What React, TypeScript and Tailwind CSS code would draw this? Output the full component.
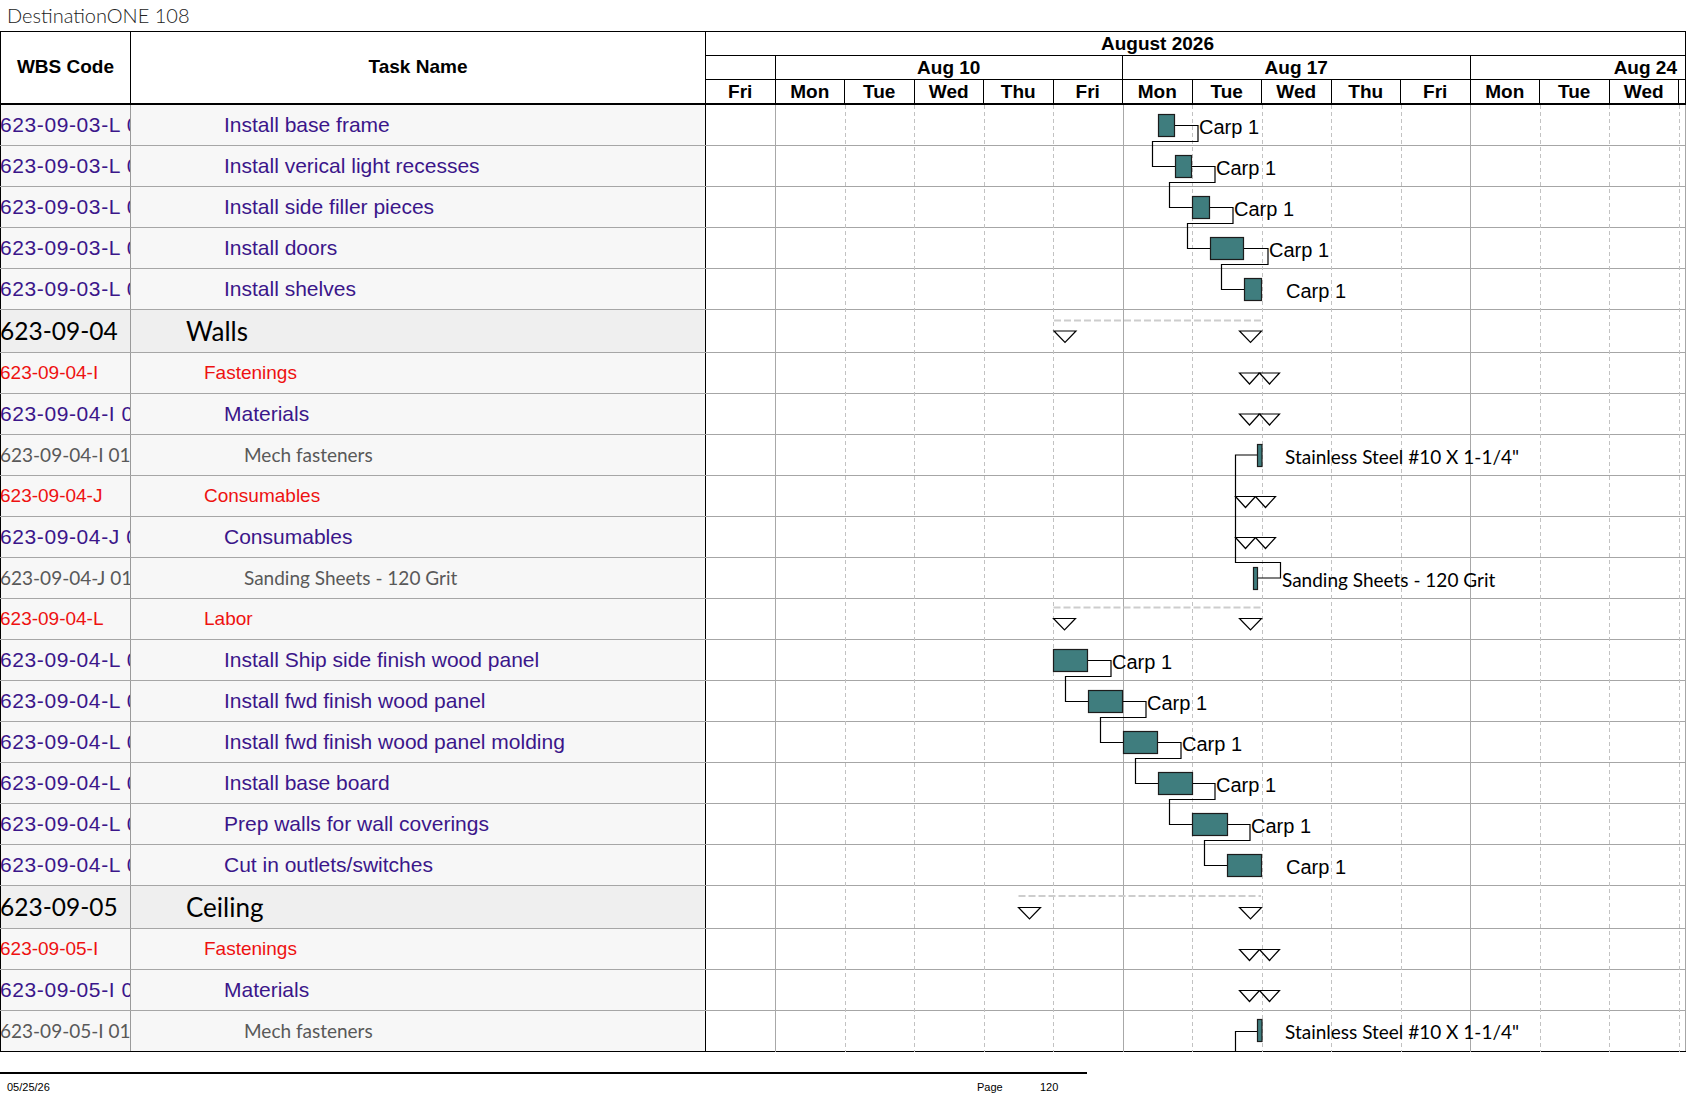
import React from "react";

type Kind = "task" | "summary" | "red" | "item";

type Row = {
  wbs: string;
  name: string;
  kind: Kind;
};

const ROWS: Row[] = [
  { wbs: "623-09-03-L 01", name: "Install base frame", kind: "task" },
  { wbs: "623-09-03-L 02", name: "Install verical light recesses", kind: "task" },
  { wbs: "623-09-03-L 03", name: "Install side filler pieces", kind: "task" },
  { wbs: "623-09-03-L 04", name: "Install doors", kind: "task" },
  { wbs: "623-09-03-L 05", name: "Install shelves", kind: "task" },
  { wbs: "623-09-04", name: "Walls", kind: "summary" },
  { wbs: "623-09-04-I", name: "Fastenings", kind: "red" },
  { wbs: "623-09-04-I 01", name: "Materials", kind: "task" },
  { wbs: "623-09-04-I 01-01", name: "Mech fasteners", kind: "item" },
  { wbs: "623-09-04-J", name: "Consumables", kind: "red" },
  { wbs: "623-09-04-J 01", name: "Consumables", kind: "task" },
  { wbs: "623-09-04-J 01-01", name: "Sanding Sheets - 120 Grit", kind: "item" },
  { wbs: "623-09-04-L", name: "Labor", kind: "red" },
  { wbs: "623-09-04-L 01", name: "Install Ship side finish wood panel", kind: "task" },
  { wbs: "623-09-04-L 02", name: "Install fwd finish wood panel", kind: "task" },
  { wbs: "623-09-04-L 03", name: "Install fwd finish wood panel molding", kind: "task" },
  { wbs: "623-09-04-L 04", name: "Install base board", kind: "task" },
  { wbs: "623-09-04-L 05", name: "Prep walls for wall coverings", kind: "task" },
  { wbs: "623-09-04-L 06", name: "Cut in outlets/switches", kind: "task" },
  { wbs: "623-09-05", name: "Ceiling", kind: "summary" },
  { wbs: "623-09-05-I", name: "Fastenings", kind: "red" },
  { wbs: "623-09-05-I 01", name: "Materials", kind: "task" },
  { wbs: "623-09-05-I 01-01", name: "Mech fasteners", kind: "item" },
];

const DAYS = ["Fri", "Mon", "Tue", "Wed", "Thu", "Fri", "Mon", "Tue", "Wed", "Thu", "Fri", "Mon", "Tue", "Wed"];

const ARIAL = "font-['Liberation_Sans',Arial,sans-serif]";
const CALIBRI = "font-['Lato','Liberation_Sans',sans-serif]";

// row tops in page coordinates
const BODY_TOP = 105;
const TOPS: number[] = [];
{
  let y = BODY_TOP;
  for (const r of ROWS) {
    TOPS.push(y);
    y += r.kind === "summary" ? 43 : 41;
  }
}
const BODY_H = ROWS.reduce((s, r) => s + (r.kind === "summary" ? 43 : 41), 0);

type Bar = { row: number; l: number; r: number; label: number; vx?: number };

const WOOD_CHAIN: Bar[] = [
  { row: 0, l: 1158.5, r: 1174.5, label: 1199, vx: 1152.5 },
  { row: 1, l: 1175.5, r: 1191.5, label: 1216, vx: 1169.5 },
  { row: 2, l: 1192.5, r: 1209.5, label: 1234, vx: 1187.5 },
  { row: 3, l: 1210.5, r: 1243.5, label: 1269, vx: 1221.5 },
  { row: 4, l: 1244.5, r: 1261.5, label: 1286 },
];

const LABOR_CHAIN: Bar[] = [
  { row: 13, l: 1053.5, r: 1087.5, label: 1112, vx: 1065.5 },
  { row: 14, l: 1088.5, r: 1122.5, label: 1147, vx: 1100.5 },
  { row: 15, l: 1123.5, r: 1157.5, label: 1182, vx: 1135.5 },
  { row: 16, l: 1158.5, r: 1192.5, label: 1216, vx: 1169.5 },
  { row: 17, l: 1192.5, r: 1227.5, label: 1251, vx: 1204.5 },
  { row: 18, l: 1227.5, r: 1261.5, label: 1286 },
];

const TEAL = "#3f7d7e";

function Milestone({ x, y, w = 22, h = 11.5 }: { x: number; y: number; w?: number; h?: number }) {
  return (
    <path
      d={`M${x} ${y} H${x + w} L${x + w / 2} ${y + h} Z`}
      fill="#fff"
      stroke="#000"
      strokeWidth={1.2}
    />
  );
}

function DoubleMilestone({ x, y }: { x: number; y: number }) {
  return (
    <>
      <Milestone x={x} y={y} w={20} h={11} />
      <Milestone x={x + 20} y={y} w={20} h={11} />
    </>
  );
}

function Chain({ bars }: { bars: Bar[] }) {
  return (
    <>
      {bars.map((b, i) => {
        const top = TOPS[b.row];
        const mid = top + 20.5;
        const next = bars[i + 1];
        return (
          <g key={b.row}>
            {next ? (
              <path
                d={`M${b.r} ${mid} H${b.label - 1} V${top + 36.5} H${b.vx} V${TOPS[next.row] + 20.5} H${next.l}`}
                fill="none"
                stroke="#000"
                strokeWidth={1.2}
              />
            ) : null}
            <rect x={b.l} y={top + 9.5} width={b.r - b.l} height={22} fill={TEAL} stroke="#1c1c1c" strokeWidth={1.2} />
            <text
              x={b.label}
              y={mid + 1}
              dominantBaseline="central"
              fontFamily="'Liberation Sans', Arial, sans-serif"
              fontSize={20}
              fill="#000"
            >
              Carp 1
            </text>
          </g>
        );
      })}
    </>
  );
}

function GanttOverlay() {
  const bottom = BODY_TOP + BODY_H;
  const lines = [];
  for (let k = 1; k <= 14; k++) {
    const x = 706 + Math.floor(69.5 * k) + 0.5;
    const solid = k === 1 || k === 6 || k === 11;
    lines.push(
      <line
        key={k}
        x1={x}
        x2={x}
        y1={BODY_TOP}
        y2={bottom}
        stroke={solid ? "#a8a8a8" : "#c2c2c2"}
        strokeWidth={1}
        strokeDasharray={solid ? undefined : "4 3"}
      />
    );
  }
  const walls = TOPS[5];
  const labor = TOPS[12];
  const ceiling = TOPS[19];
  const calibri = "Lato, 'Liberation Sans', sans-serif";

  return (
    <svg
      className="pointer-events-none absolute left-[706px] top-0"
      width={979}
      height={BODY_H}
      viewBox={`706 ${BODY_TOP} 979 ${BODY_H}`}
    >
      {lines}

      {/* Walls summary */}
      <line x1={1054} x2={1262} y1={walls + 10.5} y2={walls + 10.5} stroke="#cdcdcd" strokeWidth={2} strokeDasharray="7 3" />
      <Milestone x={1054} y={walls + 21} />
      <Milestone x={1239.5} y={walls + 21} />

      <DoubleMilestone x={1239.5} y={TOPS[6] + 20} />
      <DoubleMilestone x={1239.5} y={TOPS[7] + 20} />

      {/* Mech fasteners -> Sanding sheets link */}
      <path
        d={`M1257.5 ${TOPS[8] + 20} H1235.5 V${TOPS[11] + 4.5} H1280.5 V${TOPS[11] + 20} H1257.5`}
        fill="none"
        stroke="#000"
        strokeWidth={1.2}
      />
      <rect x={1257.5} y={TOPS[8] + 9.5} width={4.5} height={22} fill={TEAL} stroke="#1c1c1c" strokeWidth={1.2} />
      <text x={1285} y={TOPS[8] + 21} dominantBaseline="central" fontFamily={calibri} fontSize={19} fill="#000">
        Stainless Steel #10 X 1-1/4"
      </text>

      <DoubleMilestone x={1235.5} y={TOPS[9] + 20.5} />
      <DoubleMilestone x={1235.5} y={TOPS[10] + 20.5} />

      <rect x={1253.5} y={TOPS[11] + 9.5} width={4} height={22} fill={TEAL} stroke="#1c1c1c" strokeWidth={1.2} />
      <text x={1282} y={TOPS[11] + 21} dominantBaseline="central" fontFamily={calibri} fontSize={19} fill="#000">
        Sanding Sheets - 120 Grit
      </text>

      {/* Labor summary */}
      <line x1={1053.5} x2={1262} y1={labor + 8.5} y2={labor + 8.5} stroke="#cdcdcd" strokeWidth={2} strokeDasharray="7 3" />
      <Milestone x={1053.5} y={labor + 19.5} />
      <Milestone x={1239.5} y={labor + 19.5} />

      <Chain bars={WOOD_CHAIN} />
      <Chain bars={LABOR_CHAIN} />

      {/* Ceiling summary */}
      <line x1={1018.5} x2={1261} y1={ceiling + 10} y2={ceiling + 10} stroke="#cdcdcd" strokeWidth={2} strokeDasharray="7 3" />
      <Milestone x={1018.5} y={ceiling + 21.5} />
      <Milestone x={1239.5} y={ceiling + 21.5} />

      <DoubleMilestone x={1239.5} y={TOPS[20] + 20.5} />
      <DoubleMilestone x={1239.5} y={TOPS[21] + 20.5} />

      <path d={`M1257.5 ${TOPS[22] + 20.5} H1235.5 V${bottom}`} fill="none" stroke="#000" strokeWidth={1.2} />
      <rect x={1257.5} y={TOPS[22] + 8.5} width={4.5} height={22} fill={TEAL} stroke="#1c1c1c" strokeWidth={1.2} />
      <text x={1285} y={TOPS[22] + 20} dominantBaseline="central" fontFamily={calibri} fontSize={19} fill="#000">
        Stainless Steel #10 X 1-1/4"
      </text>
    </svg>
  );
}

function TableRow({ row, last }: { row: Row; last: boolean }) {
  const summary = row.kind === "summary";
  const bg = summary ? "bg-[#efefef]" : "bg-[#f7f7f7]";

  let wbsClass = "";
  let nameClass = "";
  if (row.kind === "task") {
    wbsClass = `${ARIAL} text-[21px] text-[#3b168a] tracking-[0.6px]`;
    nameClass = `${ARIAL} text-[21px] text-[#3b168a] pl-[93px]`;
  } else if (row.kind === "red") {
    wbsClass = `${ARIAL} text-[19px] text-[#ee1111]`;
    nameClass = `${ARIAL} text-[19px] text-[#ee1111] pl-[73px]`;
  } else if (row.kind === "item") {
    wbsClass = `${CALIBRI} text-[19px] text-[#595959]`;
    nameClass = `${CALIBRI} text-[19px] text-[#595959] pl-[113px]`;
  } else {
    wbsClass = `${CALIBRI} text-[24.5px] text-black`;
    nameClass = `${CALIBRI} text-[26px] text-black pl-[55px]`;
  }

  return (
    <div
      className={`flex w-[1686px] border-b ${last ? "border-black" : "border-[#a6a6a6]"} ${
        summary ? "h-[43px]" : "h-[41px]"
      }`}
    >
      <div
        className={`flex w-[131px] shrink-0 items-center overflow-hidden whitespace-nowrap border-l border-r border-l-black border-r-[#9a9a9a] ${bg}`}
      >
        <span className={`-ml-[1px] ${wbsClass}`}>{row.wbs}</span>
      </div>
      <div className={`flex w-[575px] shrink-0 items-center whitespace-nowrap border-r border-black ${bg}`}>
        <span className={nameClass}>{row.name}</span>
      </div>
      <div className="flex-1 border-r border-[#a6a6a6] bg-white" />
    </div>
  );
}

function Header() {
  return (
    <div className={`flex h-[74px] w-[1686px] border-b-2 border-t border-black ${ARIAL} text-[19px] font-bold text-black`}>
      <div className="flex w-[131px] shrink-0 items-center justify-center border-l border-r border-black">WBS Code</div>
      <div className="flex w-[575px] shrink-0 items-center justify-center border-r border-black">Task Name</div>
      <div className="flex flex-1 flex-col border-r border-black">
        <div className="flex h-[23.5px] items-center justify-center border-b border-black pr-[76px] leading-none">
          August 2026
        </div>
        <div className="flex h-[24px] border-b border-black leading-none">
          <div className="w-[69.5px] shrink-0 border-r border-black" />
          <div className="flex w-[347.5px] shrink-0 items-center justify-center border-r border-black">Aug 10</div>
          <div className="flex w-[347.5px] shrink-0 items-center justify-center border-r border-black">Aug 17</div>
          <div className="flex flex-1 items-center justify-end pr-[8px]">Aug 24</div>
        </div>
        <div className="flex flex-1 leading-none">
          {DAYS.map((d, i) => (
            <div key={i} className="flex w-[69.5px] shrink-0 items-center justify-center border-r border-black">
              {d}
            </div>
          ))}
          <div className="flex-1" />
        </div>
      </div>
    </div>
  );
}

export default function App() {
  return (
    <div className="h-[1097px] w-[1687px] overflow-hidden bg-white text-black">
      <div className={`h-[31px] pl-[7px] pt-[2px] ${CALIBRI} text-[20px] font-light leading-[26px] text-[#222]`}>
        DestinationONE 108
      </div>
      <Header />
      <div className="relative">
        {ROWS.map((r, i) => (
          <TableRow key={i} row={r} last={i === ROWS.length - 1} />
        ))}
        <GanttOverlay />
      </div>
      <div className={`mt-[20px] w-[1087px] border-t-2 border-black ${ARIAL} text-[11px] text-black`}>
        <div className="flex pt-[5px]">
          <span className="w-[977px] shrink-0 pl-[7px]">05/25/26</span>
          <span className="w-[63px] shrink-0">Page</span>
          <span>120</span>
        </div>
      </div>
    </div>
  );
}
